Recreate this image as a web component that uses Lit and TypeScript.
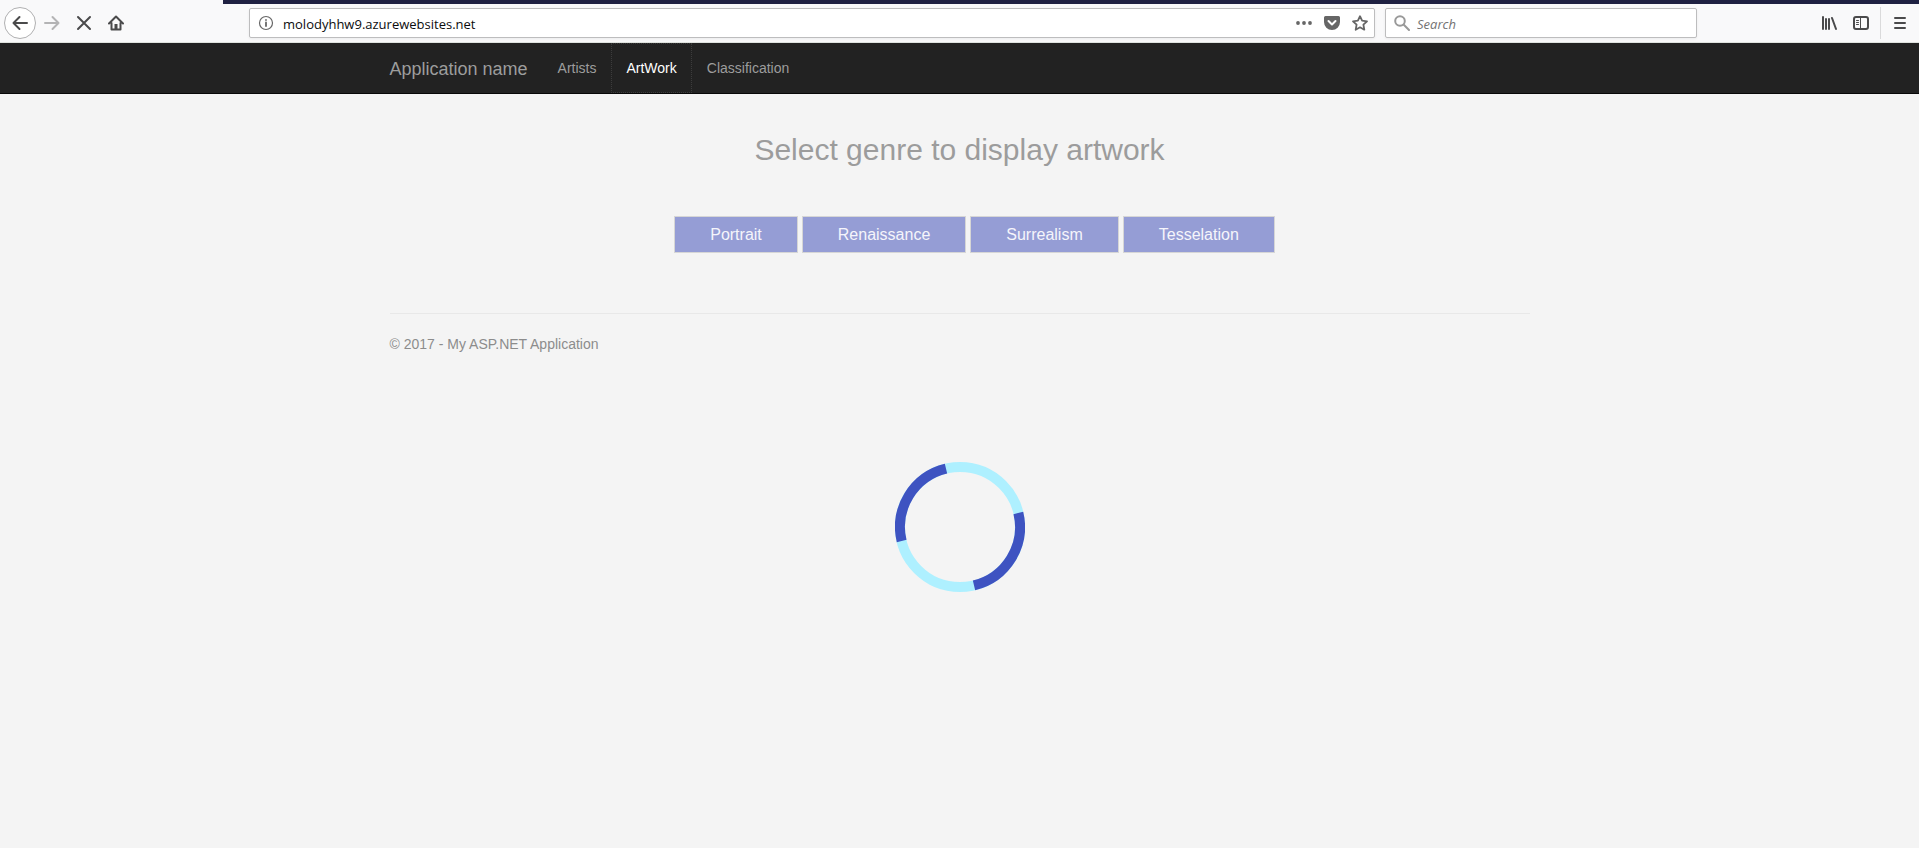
import { LitElement, html, css } from "lit";
import { customElement, property, state } from "lit/decorators.js";
import { classMap } from "lit/directives/class-map.js";

@customElement("browser-toolbar")
class BrowserToolbar extends LitElement {
  @property() address = "";

  static styles = css`
    :host {
      display: block;
      font-family: "Open Sans", "Noto Sans", sans-serif;
      font-size: 13px;
      color: #0c0c0d;
    }
    .strip {
      height: 4px;
      margin-left: 223px;
      background: #1f2142;
    }
    .bar {
      display: flex;
      align-items: center;
      height: 38px;
      padding: 0 7px 0 4px;
      background: #f9f9fa;
      border-bottom: 1px solid #dfe3df;
    }
    .shell {
      background: #f9f9fa;
    }
    button {
      display: grid;
      place-items: center;
      width: 32px;
      height: 32px;
      padding: 0;
      border: 0;
      background: none;
      color: #4a4a4b;
    }
    svg {
      display: block;
      width: 16px;
      height: 16px;
      fill: none;
      stroke: currentColor;
      stroke-width: 2;
      stroke-linecap: round;
      stroke-linejoin: round;
    }
    .back {
      box-sizing: border-box;
      border: 1px solid #b0b0b1;
      border-radius: 50%;
      background: #fff;
    }
    .forward {
      color: #b4b4b5;
    }
    .field {
      box-sizing: border-box;
      display: flex;
      align-items: center;
      height: 30px;
      border: 1px solid #bdbdbe;
      border-radius: 2px;
      background: #fff;
      box-shadow: 0 1px 3px rgba(0, 0, 0, 0.06);
    }
    .url {
      flex: 1;
      margin-left: 117px;
      padding-left: 8px;
    }
    .find {
      width: 312px;
      margin: 0 116px 0 10px;
      padding-left: 4px;
    }
    .field button {
      width: 28px;
      height: 28px;
      color: #666;
    }
    .url button:first-child {
      width: 16px;
    }
    .find svg {
      color: #999;
    }
    .find button {
      width: 24px;
    }
    input {
      flex: 1;
      min-width: 0;
      padding: 2px 0 0;
      border: 0;
      outline: 0;
      background: none;
      font: inherit;
      line-height: 20px;
      color: inherit;
    }
    .url input {
      margin-left: 9px;
    }
    .find input {
      margin-left: 3px;
    }
    .find input::placeholder {
      color: #737373;
      font-style: italic;
      opacity: 1;
    }
    .menu {
      margin-left: 3px;
      padding-left: 6px;
      border-left: 1px solid #dadadb;
    }
    .solid {
      fill: currentColor;
      stroke: none;
    }
  `;

  render() {
    return html`
      <div class="shell">
        <div class="strip"></div>
        <div class="bar">
          <button class="back" aria-label="Back">
            <svg viewBox="0 0 16 16"><path d="M15 8H1.5M7.5 2L1.5 8l6 6" /></svg>
          </button>
          <button class="forward" aria-label="Forward">
            <svg viewBox="0 0 16 16"><path d="M1 8h13.5M8.500 2l6 6-6 6" /></svg>
          </button>
          <button aria-label="Stop">
            <svg viewBox="0 0 16 16"><path d="M2 2l12 12M14 2L2 14" /></svg>
          </button>
          <button aria-label="Home">
            <svg viewBox="0 0 16 16">
              <path d="M1 8.500L8 1.500l7 7M3.500 8v6.500h9V8" />
              <path class="solid" d="M6.500 9h3v5h-3z" />
            </svg>
          </button>
          <div class="field url">
            <button aria-label="Site information">
              <svg viewBox="0 0 16 16">
                <circle cx="8" cy="8" r="6.500" stroke-width="1.200" />
                <path d="M8 7.500v3.500M8 4.900v.1" stroke-width="1.800" />
              </svg>
            </button>
            <input aria-label="Address" .value=${this.address} />
            <button aria-label="Page actions">
              <svg class="solid" viewBox="0 0 16 16">
                <circle cx="2" cy="8" r="1.900" /><circle cx="8" cy="8" r="1.900" /><circle cx="14" cy="8" r="1.900" />
              </svg>
            </button>
            <button aria-label="Save to Pocket">
              <svg viewBox="0 0 16 16">
                <path class="solid" d="M1.500 1h13A1.500 1.500 0 0 1 16 2.500V7A8 8 0 0 1 0 7V2.500A1.500 1.500 0 0 1 1.500 1z" />
                <path d="M4.500 6L8 9.500 11.500 6" stroke="#fff" />
              </svg>
            </button>
            <button aria-label="Bookmark">
              <svg viewBox="0 0 16 16">
                <path d="M8 1.200l2.100 4.500 4.900.6-3.600 3.400.9 5L8 12.300l-4.300 2.400.9-5L1 6.300l4.900-.6z" stroke-width="1.800" />
              </svg>
            </button>
          </div>
          <div class="field find">
            <button aria-label="Run search">
              <svg viewBox="0 0 16 16"><circle cx="6" cy="6" r="4.800" /><path d="M9.800 9.800L15 15" /></svg>
            </button>
            <input aria-label="Search" placeholder="Search" />
          </div>
          <button aria-label="Library">
            <svg viewBox="0 0 16 16"><path d="M2 2v12M5 4v10M8 4v10M11 3l4 11" /></svg>
          </button>
          <button aria-label="Sidebars">
            <svg viewBox="0 0 16 16">
              <rect x="1" y="2" width="14" height="12" rx="2" />
              <path d="M7.500 2v12M3.500 5.500H5.500M3.500 7.500H5.500M3.500 9.500H5.500" stroke-width="1" />
            </svg>
          </button>
          <button class="menu" aria-label="Open menu">
            <svg viewBox="0 0 16 16"><path d="M3 3h10M3 8h10M3 13h10" /></svg>
          </button>
        </div>
      </div>
    `;
  }
}

@customElement("loading-ring")
class LoadingRing extends LitElement {
  static styles = css`
    :host {
      display: block;
    }
    svg {
      display: block;
      width: 130px;
      height: 130px;
      margin: 0 auto;
    }
  `;

  render() {
    return html`
      <svg viewBox="0 0 130 130" role="img" aria-label="Loading" fill="none" stroke-width="10">
        <circle cx="65" cy="65" r="60" stroke="#aef0ff" />
        <circle
          cx="65" cy="65" r="60" stroke="#3e53c1"
          pathLength="4" stroke-dasharray="1 1" transform="rotate(-13.500 65 65)"
        />
      </svg>
    `;
  }
}

@customElement("app-root")
class AppRoot extends LitElement {
  @state() private active = "ArtWork";

  private links = ["Artists", "ArtWork", "Classification"];
  private genres = ["Portrait", "Renaissance", "Surrealism", "Tesselation"];

  static styles = css`
    :host {
      display: block;
      min-height: 100vh;
      background: #f4f4f4;
      font-family: "Liberation Sans", Arial, sans-serif;
      font-size: 14px;
      line-height: 20px;
      color: #8c8c8c;
    }
    .container {
      box-sizing: border-box;
      max-width: 1170px;
      margin: 0 auto;
      padding: 0 15px;
    }
    .navbar {
      background: #222;
      border-bottom: 1px solid #080808;
    }
    .navbar .container {
      display: flex;
    }
    a {
      color: #9d9d9d;
      text-decoration: none;
    }
    .brand {
      padding: 16px 15px 14px 0;
      font-size: 18px;
    }
    .links {
      display: flex;
      margin: 0;
      padding: 0;
      list-style: none;
    }
    .links a {
      display: block;
      padding: 15px;
    }
    .links .active {
      color: #fff;
      outline: 1px dotted #3c3c3c;
      outline-offset: -1px;
    }
    h2 {
      margin: 39px 0;
      font-size: 30px;
      font-weight: 400;
      line-height: 33px;
      text-align: center;
      color: #9c9c9c;
    }
    .genres {
      display: flex;
      justify-content: center;
      gap: 4px;
      margin: 50px 0 60px;
      padding-left: 30px;
    }
    .genres button {
      padding: 7px 35px;
      border: 1px solid #d6d6d6;
      background: #959dd5;
      color: #f5f5fb;
      font: inherit;
      font-size: 16px;
      line-height: 21px;
    }
    hr {
      margin: 0 0 20px;
      border: 0;
      border-top: 1px solid #e8e8e8;
    }
    p {
      margin: 0;
    }
    loading-ring {
      margin-top: 108px;
    }
  `;

  render() {
    return html`
      <browser-toolbar address="molodyhhw9.azurewebsites.net"></browser-toolbar>
      <nav class="navbar">
        <div class="container">
          <a class="brand" href="#">Application name</a>
          <ul class="links">
            ${this.links.map(
              (name) => html`<li>
                <a href="#" class=${classMap({ active: name === this.active })} @click=${() => (this.active = name)}>${name}</a>
              </li>`
            )}
          </ul>
        </div>
      </nav>
      <main class="container">
        <h2>Select genre to display artwork</h2>
        <div class="genres">${this.genres.map((g) => html`<button>${g}</button>`)}</div>
        <hr />
        <footer><p>© 2017 - My ASP.NET Application</p></footer>
      </main>
      <loading-ring></loading-ring>
    `;
  }
}
